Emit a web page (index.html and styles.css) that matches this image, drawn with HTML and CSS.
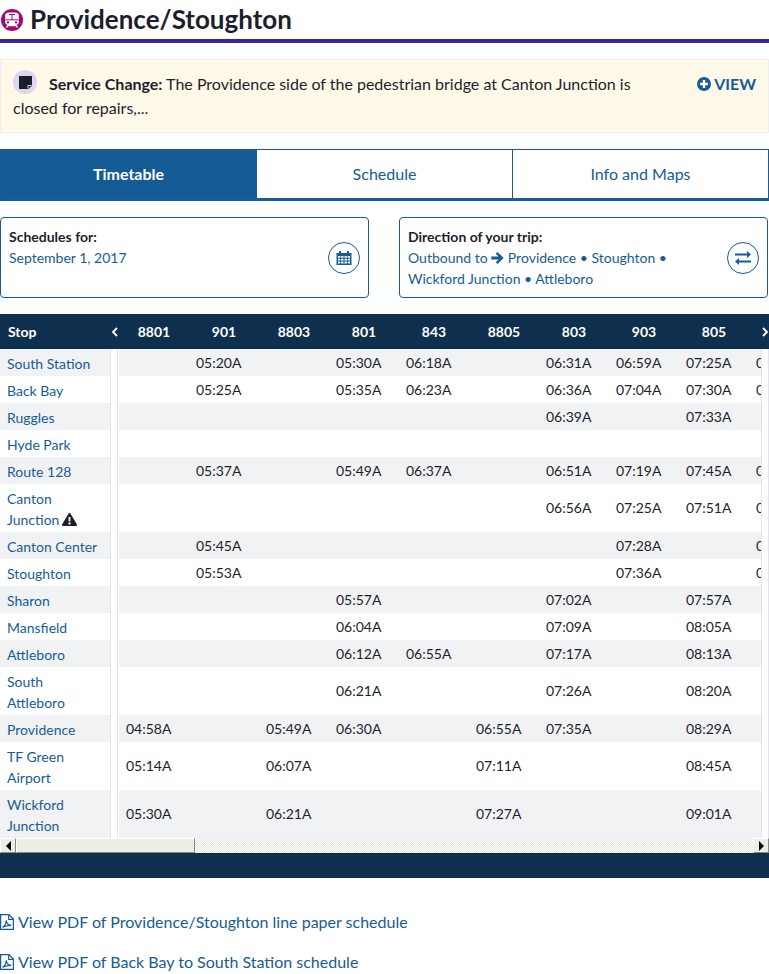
FILE: index.html
```html
<!DOCTYPE html>
<html lang="en">
<head>
    <meta charset="UTF-8">
    <meta name="viewport" content="width=device-width, initial-scale=1.0">
    <title>Providence/Stoughton</title>
    <link rel="stylesheet" href="styles.css">
</head>
<body>
    <header class="line-header">
        <span class="line-icon">
            <svg viewBox="0 0 16 16" width="16" height="16"><path fill="#fff" d="M5 .5h6c2.300 0 3.800 1 3.800 2.500v7.500c0 1.300-1 2.100-2.300 2.200l1.800 2.800h-1.800l-.7-1.200h-7.600l-.7 1.200h-1.800l1.800-2.800c-1.300-.1-2.300-.9-2.300-2.200v-7.500c0-1.500 1.500-2.500 3.800-2.500z"/><path fill="none" stroke="#a00a78" d="M1.500 7.800h13M8 2.800v5M5 2.500h6"/><circle cx="4" cy="10.400" r="1.100" fill="#a00a78"/><circle cx="12" cy="10.400" r="1.100" fill="#a00a78"/></svg>
        </span>
        <h1>Providence/Stoughton</h1>
    </header>

    <section class="alert">
        <p class="alert-text">
            <span class="alert-icon"><svg viewBox="0 0 13 13" width="13" height="13"><path fill="#1c1f2b" d="M0 0h13v9.500l-3.500 3.500h-9.500z"/><path fill="none" stroke="#dcd6ee" d="M9 12.500v-3h3.500"/></svg></span>
            <strong>Service Change:</strong> The Providence side of the pedestrian bridge at Canton Junction is closed for repairs,...
        </p>
        <a class="alert-view" href="#">
            <svg viewBox="0 0 14 14" width="14" height="14"><circle cx="7" cy="7" r="7" fill="#165c96"/><path fill="#fff" d="M5.800 3h2.400v2.800h2.800v2.400h-2.800v2.800h-2.400v-2.800h-2.800v-2.400h2.800z"/></svg>
            VIEW
        </a>
    </section>

    <nav class="tabs">
        <a class="tab tab-active" href="#">Timetable</a>
        <a class="tab" href="#">Schedule</a>
        <a class="tab" href="#">Info and Maps</a>
    </nav>

    <section class="pickers">
        <div class="picker">
            <div>
                <h2>Schedules for:</h2>
                <p>September 1, 2017</p>
            </div>
            <span class="picker-btn">
                <svg viewBox="0 0 16 16" width="16" height="16"><path fill="#165c96" d="M3 1h2v2h6v-2h2v2h2.500v12h-15v-12h2.500zM2 6v1.800h2.200v-1.800zM5.100 6v1.800h2.400v-1.800zM8.500 6v1.800h2.400v-1.800zM11.800 6v1.800h2.200v-1.800zM2 8.700v1.900h2.200v-1.900zM5.100 8.700v1.900h2.400v-1.900zM8.500 8.700v1.900h2.400v-1.900zM11.800 8.700v1.900h2.200v-1.900zM2 11.500v2h2.200v-2zM5.100 11.500v2h2.400v-2zM8.500 11.500v2h2.400v-2zM11.800 11.500v2h2.200v-2z"/></svg>
            </span>
        </div>
        <div class="picker">
            <div>
                <h2>Direction of your trip:</h2>
                <p>Outbound to <svg class="arrow" viewBox="0 0 13 12" width="13" height="12"><path fill="#165c96" d="M6.500 0l6.200 6-6.200 6-1.800-1.800 2.900-2.800h-7.300v-2.800h7.300l-2.900-2.800z"/></svg> Providence • Stoughton •<br>Wickford Junction • Attleboro</p>
            </div>
            <span class="picker-btn">
                <svg viewBox="0 0 16 14" width="16" height="14"><path fill="#165c96" d="M12 0l4 3.500-4 3.500v-2.500h-12v-2h12zM4 7v2.500h12v2h-12v2.500l-4-3.500z"/></svg>
            </span>
        </div>
    </section>

    <section class="timetable">
        <div class="timetable-scroll">
            <table>
                <thead>
                    <tr>
                        <th class="stop">Stop</th>
                        <th class="gap"><svg viewBox="0 0 6 10" width="6" height="10"><path fill="none" stroke="#fff" stroke-width="1.800" d="M5 1l-4 4 4 4"/></svg></th>
                        <th>8801</th><th>901</th><th>8803</th><th>801</th><th>843</th><th>8805</th><th>803</th><th>903</th><th>805</th><th></th>
                    </tr>
                </thead>
                <tbody>
                    <tr class="alt"><td class="stop"><a href="#">South Station</a></td><td class="gap"></td><td></td><td>05:20A</td><td></td><td>05:30A</td><td>06:18A</td><td></td><td>06:31A</td><td>06:59A</td><td>07:25A</td><td>0</td></tr>
                    <tr><td class="stop"><a href="#">Back Bay</a></td><td class="gap"></td><td></td><td>05:25A</td><td></td><td>05:35A</td><td>06:23A</td><td></td><td>06:36A</td><td>07:04A</td><td>07:30A</td><td>0</td></tr>
                    <tr class="alt"><td class="stop"><a href="#">Ruggles</a></td><td class="gap"></td><td></td><td></td><td></td><td></td><td></td><td></td><td>06:39A</td><td></td><td>07:33A</td><td></td></tr>
                    <tr><td class="stop"><a href="#">Hyde Park</a></td><td class="gap"></td><td></td><td></td><td></td><td></td><td></td><td></td><td></td><td></td><td></td><td></td></tr>
                    <tr class="alt"><td class="stop"><a href="#">Route 128</a></td><td class="gap"></td><td></td><td>05:37A</td><td></td><td>05:49A</td><td>06:37A</td><td></td><td>06:51A</td><td>07:19A</td><td>07:45A</td><td>0</td></tr>
                    <tr><td class="stop"><a href="#">Canton<br>Junction</a> <svg class="warn" viewBox="0 0 15 13" width="15" height="13"><path fill="#1c1f2b" fill-rule="evenodd" d="M7.500 0c.5 0 .9.300 1.100.7l6.200 10.600c.5.800-.1 1.700-1 1.700h-12.600c-.9 0-1.500-.9-1-1.700l6.200-10.600c.2-.4.600-.7 1.100-.7zM6.500 4l.2 4.600h1.600l.2-4.600zM6.500 9.500v1.900h2v-1.900z"/></svg></td><td class="gap"></td><td></td><td></td><td></td><td></td><td></td><td></td><td>06:56A</td><td>07:25A</td><td>07:51A</td><td>0</td></tr>
                    <tr class="alt"><td class="stop"><a href="#">Canton Center</a></td><td class="gap"></td><td></td><td>05:45A</td><td></td><td></td><td></td><td></td><td></td><td>07:28A</td><td></td><td>0</td></tr>
                    <tr><td class="stop"><a href="#">Stoughton</a></td><td class="gap"></td><td></td><td>05:53A</td><td></td><td></td><td></td><td></td><td></td><td>07:36A</td><td></td><td>0</td></tr>
                    <tr class="alt"><td class="stop"><a href="#">Sharon</a></td><td class="gap"></td><td></td><td></td><td></td><td>05:57A</td><td></td><td></td><td>07:02A</td><td></td><td>07:57A</td><td></td></tr>
                    <tr><td class="stop"><a href="#">Mansfield</a></td><td class="gap"></td><td></td><td></td><td></td><td>06:04A</td><td></td><td></td><td>07:09A</td><td></td><td>08:05A</td><td></td></tr>
                    <tr class="alt"><td class="stop"><a href="#">Attleboro</a></td><td class="gap"></td><td></td><td></td><td></td><td>06:12A</td><td>06:55A</td><td></td><td>07:17A</td><td></td><td>08:13A</td><td></td></tr>
                    <tr><td class="stop"><a href="#">South<br>Attleboro</a></td><td class="gap"></td><td></td><td></td><td></td><td>06:21A</td><td></td><td></td><td>07:26A</td><td></td><td>08:20A</td><td></td></tr>
                    <tr class="alt"><td class="stop"><a href="#">Providence</a></td><td class="gap"></td><td>04:58A</td><td></td><td>05:49A</td><td>06:30A</td><td></td><td>06:55A</td><td>07:35A</td><td></td><td>08:29A</td><td></td></tr>
                    <tr><td class="stop"><a href="#">TF Green<br>Airport</a></td><td class="gap"></td><td>05:14A</td><td></td><td>06:07A</td><td></td><td></td><td>07:11A</td><td></td><td></td><td>08:45A</td><td></td></tr>
                    <tr class="alt"><td class="stop"><a href="#">Wickford<br>Junction</a></td><td class="gap"></td><td>05:30A</td><td></td><td>06:21A</td><td></td><td></td><td>07:27A</td><td></td><td></td><td>09:01A</td><td></td></tr>
                </tbody>
            </table>
            <span class="edge-strip"></span>
            <svg class="next-arrow" viewBox="0 0 6 10" width="6" height="10"><path fill="none" stroke="#fff" stroke-width="1.800" d="M1 1l4 4-4 4"/></svg>
        </div>
        <div class="scrollbar">
            <span class="scroll-btn"><i class="tri tri-left"></i></span>
            <span class="scroll-thumb"></span>
            <span class="scroll-track"></span>
            <span class="scroll-btn"><i class="tri tri-right"></i></span>
        </div>
        <div class="timetable-foot"></div>
    </section>

    <section class="pdf-links">
        <a href="#"><svg viewBox="0 0 14 16" width="14" height="16"><path fill="none" stroke="#165c96" stroke-width="1.200" d="M.6.600h8.300l4.500 4.500v10.300h-12.800zM8.700.800v4.500h4.500M2.500 13.200c2-1 3.500-3.800 3.800-7 .3 3 2 5 5 5.200-2.800 0-6.500.6-8.800 1.800z"/></svg>View PDF of Providence/Stoughton line paper schedule</a>
        <a href="#"><svg viewBox="0 0 14 16" width="14" height="16"><path fill="none" stroke="#165c96" stroke-width="1.200" d="M.6.600h8.300l4.500 4.500v10.300h-12.800zM8.700.800v4.500h4.500M2.500 13.200c2-1 3.500-3.800 3.800-7 .3 3 2 5 5 5.200-2.800 0-6.500.6-8.800 1.800z"/></svg>View PDF of Back Bay to South Station schedule</a>
    </section>
</body>
</html>
```

FILE: styles.css
```css
/* General Styles */
body {
    font-family: 'Lato', sans-serif;
    font-size: 14px;
    line-height: 21px;
    color: #1c1f2b;
    background-color: #ffffff;
    margin: 0;
    padding: 0;
    overflow: hidden;
}

a {
    color: #165c96;
    text-decoration: none;
}

/* Line title */
.line-header {
    display: flex;
    align-items: center;
    gap: 7px;
    height: 39px;
    padding-left: 1px;
    border-bottom: 4px solid #3524a8;
}

.line-icon {
    display: flex;
    align-items: center;
    justify-content: center;
    width: 22px;
    height: 22px;
    border-radius: 50%;
    background-color: #a00a78;
}

h1 {
    margin: 0;
    font-size: 26px;
    font-weight: 700;
    line-height: 39px;
}

/* Alert */
.alert {
    display: flex;
    justify-content: space-between;
    margin-top: 16px;
    padding: 12px 12px 12px 12px;
    height: 74px;
    box-sizing: border-box;
    background-color: #fff9e9;
    border: 1px solid #eeeeee;
    font-size: 16px;
    line-height: 24px;
}

.alert-text {
    margin: 0;
    width: 650px;
}

.alert-icon {
    float: left;
    display: flex;
    align-items: center;
    justify-content: center;
    width: 24px;
    height: 24px;
    margin: -2px 12px 0 0;
    border-radius: 50%;
    background-color: #dcd6ee;
}

.alert-view {
    display: flex;
    align-items: center;
    gap: 3px;
    height: 24px;
    font-size: 16px;
    font-weight: 700;
}

/* Tabs */
.tabs {
    display: flex;
    margin-top: 16px;
    height: 52px;
    box-sizing: border-box;
    border-top: 1px solid #165c96;
    border-bottom: 3px solid #165c96;
    border-right: 1px solid #165c96;
}

.tab {
    flex: 1;
    display: flex;
    align-items: center;
    justify-content: center;
    padding-bottom: 2px;
    font-size: 16px;
    border-left: 1px solid #165c96;
}

.tab-active {
    flex: 0 0 256px;
    box-sizing: border-box;
    background-color: #165c96;
    background-image: linear-gradient(#165c96, #135a94);
    color: #ffffff;
    font-weight: 700;
}

/* Date and direction boxes */
.pickers {
    display: flex;
    justify-content: space-between;
    margin: 16px 1px 16px 0;
}

.picker {
    display: flex;
    justify-content: space-between;
    align-items: flex-start;
    width: 369px;
    height: 81px;
    box-sizing: border-box;
    padding: 8px;
    border: 1px solid #165c96;
    border-radius: 4px;
}

.picker h2 {
    margin: 0;
    font-size: 14px;
    font-weight: 700;
}

.picker p {
    margin: 0;
    color: #165c96;
}

.arrow {
    vertical-align: -1px;
}

.picker-btn {
    display: flex;
    align-items: center;
    justify-content: center;
    width: 30px;
    height: 30px;
    margin-top: 16px;
    border: 1px solid #165c96;
    border-radius: 50%;
}

/* Timetable */
.timetable-scroll {
    position: relative;
    overflow: hidden;
    width: 769px;
}

table {
    border-collapse: collapse;
    table-layout: fixed;
    width: 819px;
}

th, td {
    box-sizing: border-box;
    width: 70px;
    padding: 0 0 0 7px;
    text-align: left;
    white-space: nowrap;
    overflow: hidden;
}

thead {
    background-color: #0e2f4e;
}

th {
    height: 35px;
    padding: 0;
    color: #ffffff;
    text-align: center;
    font-weight: 700;
}

th.stop {
    width: 110px;
    padding-left: 8px;
    text-align: left;
}

th.gap {
    width: 9px;
}

td {
    height: 27px;
    padding-bottom: 1px;
}

td.stop {
    padding: 4px 0 2px 7px;
    white-space: normal;
}

td.gap {
    padding: 0;
    box-shadow: inset 1px 0 0 #e3e4e7, inset -1px 0 0 #ffffff, inset -2px 0 0 #e3e4e7;
}

tr.alt td {
    background-color: #f1f2f4;
}

tr.alt td.gap {
    background-color: #ffffff;
}

.warn {
    margin-left: -1px;
    vertical-align: -1px;
}

/* White strip that covers the rows at the right edge */
.edge-strip {
    position: absolute;
    top: 35px;
    bottom: 0;
    right: 0;
    width: 8px;
    box-sizing: border-box;
    background-color: #ffffff;
    border-left: 1px solid #e3e4e7;
    border-right: 1px solid #e3e4e7;
}

.next-arrow {
    position: absolute;
    top: 13px;
    right: 1px;
}

/* Fake horizontal scrollbar */
.scrollbar {
    display: flex;
    height: 15px;
}

.scroll-btn {
    display: flex;
    align-items: center;
    justify-content: center;
    width: 16px;
    background-color: #efede8;
    border: 1px solid #ffffff;
    border-right-color: #8a8883;
    border-bottom-color: #8a8883;
    box-sizing: border-box;
}

.scroll-thumb {
    width: 179px;
    background-color: #efede8;
    border: 1px solid #ffffff;
    border-right-color: #8a8883;
    border-bottom-color: #8a8883;
    box-sizing: border-box;
}

.scroll-track {
    flex: 1;
    background: repeating-conic-gradient(#ffffff 0 25%, #e8e5de 0 50%) 0 0 / 2px 2px;
}

.tri {
    width: 0;
    height: 0;
    border-top: 5px solid transparent;
    border-bottom: 5px solid transparent;
}

.tri-left {
    border-right: 5px solid #000000;
}

.tri-right {
    border-left: 5px solid #000000;
}

.timetable-foot {
    height: 25px;
    background-color: #0e2f4e;
}

/* PDF links */
.pdf-links {
    display: flex;
    flex-direction: column;
    gap: 16px;
    margin-top: 32px;
    font-size: 16px;
    line-height: 24px;
}

.pdf-links a {
    display: flex;
    align-items: center;
    gap: 4px;
}
```
